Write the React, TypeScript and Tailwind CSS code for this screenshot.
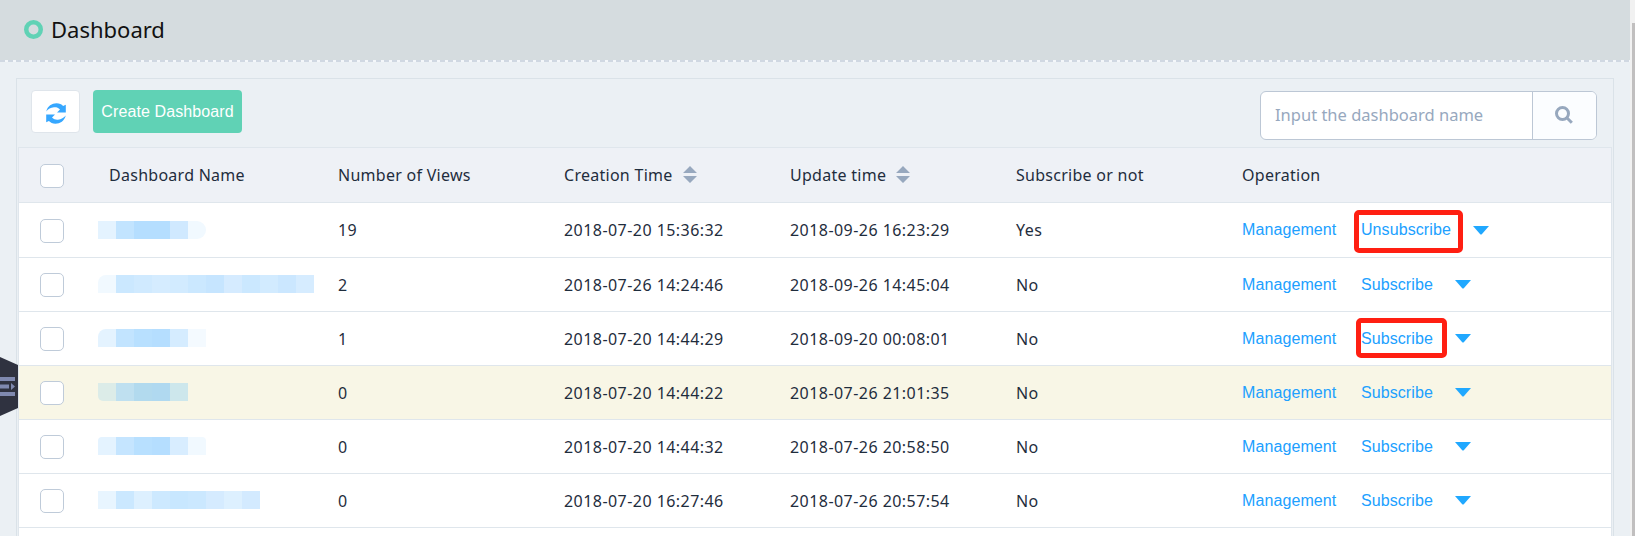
import React from "react";

type Row = {
  name: { tiles: string[]; shape?: string };
  views: string;
  created: string;
  updated: string;
  subscribed: boolean;
  active?: boolean;
  marked?: boolean;
};

const rows: Row[] = [
  {
    name: { tiles: ["#e4f3ff", "#c2e4ff", "#b5deff", "#b5deff", "#d0e9ff", "#f1f9ff"], shape: "rounded-r-[12px]" },
    views: "19", created: "2018-07-20 15:36:32", updated: "2018-09-26 16:23:29", subscribed: true, marked: true,
  },
  {
    name: { tiles: ["#f1f9ff", "#cbe8ff", "#d0eaff", "#d5ecff", "#d2ebff", "#cbe8ff", "#c6e5ff", "#d5ebff", "#cbe8ff", "#d2ebff", "#cbe7ff", "#d6ecff"], shape: "rounded-tl-[8px]" },
    views: "2", created: "2018-07-26 14:24:46", updated: "2018-09-26 14:45:04", subscribed: false,
  },
  {
    name: { tiles: ["#e4f3ff", "#c2e4ff", "#b8e0ff", "#b5deff", "#d5ecff", "#f4faff"], shape: "rounded-tl-[8px]" },
    views: "1", created: "2018-07-20 14:44:29", updated: "2018-09-20 00:08:01", subscribed: false, marked: true,
  },
  {
    name: { tiles: ["#dcece8", "#bfe0f0", "#b2daee", "#b0d9f0", "#cde7ec"], shape: "rounded-bl-[5px]" },
    views: "0", created: "2018-07-20 14:44:22", updated: "2018-07-26 21:01:35", subscribed: false, active: true,
  },
  {
    name: { tiles: ["#e4f3ff", "#c5e5ff", "#b8e0ff", "#b5deff", "#d8edff", "#f1f9ff"], shape: "rounded-t-[4px]" },
    views: "0", created: "2018-07-20 14:44:32", updated: "2018-07-26 20:58:50", subscribed: false,
  },
  {
    name: { tiles: ["#e8f5ff", "#cbe8ff", "#ddf0ff", "#cde9ff", "#c8e7ff", "#cbe8ff", "#d5ebff", "#ddf0ff", "#d3eaff"] },
    views: "0", created: "2018-07-20 16:27:46", updated: "2018-07-26 20:57:54", subscribed: false,
  },
];

const columns = "grid grid-cols-[91px_228px_226px_226px_226px_226px_1fr]";

function Checkbox({ low = false }: { low?: boolean }) {
  return (
    <span className={`ml-[21px] block size-6 rounded-[5px] border border-[#bfcbd9] bg-white ${low ? "mt-[2px]" : "mt-px"}`} />
  );
}

function SortIcon() {
  return (
    <svg className="ml-[10px] h-[17px] w-[14px]" viewBox="0 0 14 17" fill="#97a8be">
      <path d="M0 7 7 0l7 7zM0 10h14l-7 7z" />
    </svg>
  );
}

function HeaderRow() {
  return (
    <div className={`${columns} h-[56px] items-center border-y border-[#dfe6ec] bg-[#eef1f6] text-[16px] tracking-[0.27px] text-[#1f2d3d]`}>
      <Checkbox low />
      <span className="-ml-px">Dashboard Name</span>
      <span>Number of Views</span>
      <span className="flex items-center pb-px">Creation Time<SortIcon /></span>
      <span className="flex items-center pb-px">Update time<SortIcon /></span>
      <span>Subscribe or not</span>
      <span>Operation</span>
    </div>
  );
}

function SubscribeLink({ row }: { row: Row }) {
  return (
    <span className="relative">
      {row.subscribed ? "Unsubscribe" : "Subscribe"}
      {row.marked && (
        <span
          className={
            row.subscribed
              ? "absolute -left-[7px] -top-[8px] h-[43px] w-[109px] rounded-[5px] border-5 border-[#ff1f12]"
              : "absolute -left-[5px] -top-[9px] h-[40px] w-[91px] rounded-[5px] border-5 border-[#ff1f12]"
          }
        />
      )}
    </span>
  );
}

function TableRow({ row, first }: { row: Row; first: boolean }) {
  return (
    <div
      className={`${columns} shrink-0 items-center border-b border-[#dfe6ec] text-[16px] tracking-[0.45px] text-[#1f2d3d] ${first ? "h-[55px]" : "h-[54px]"} ${row.active ? "bg-[#f8f6e6]" : "bg-white"}`}
    >
      <Checkbox low={first} />
      <span className={`-ml-3 flex w-fit overflow-hidden ${first ? "" : "mb-px"} ${row.name.shape ?? ""}`}>
        {row.name.tiles.map((color, i) => (
          <span key={i} className="h-[18px] w-[18px]" style={{ backgroundColor: color }} />
        ))}
      </span>
      <span>{row.views}</span>
      <span>{row.created}</span>
      <span>{row.updated}</span>
      <span>{row.subscribed ? "Yes" : "No"}</span>
      <span className="flex items-center font-['Liberation_Sans',Arial,sans-serif] tracking-[0.1px] text-[#20a0ff]">
        <span className="mr-[24.500px]">Management</span>
        <SubscribeLink row={row} />
        <svg className="ml-[22px] h-[9px] w-[16px]" viewBox="0 0 16 9" fill="#20a8ff">
          <path d="M0 0h16L9 8q-1 1-2 0z" />
        </svg>
      </span>
    </div>
  );
}

function RefreshIcon() {
  return (
    <svg className="mt-[3px] h-[21px] w-[20px]" viewBox="0 0 20 21" fill="#36a7ff">
      <path d="M.3 8.500C1.500 3 6 .3 10.500.3c3 0 5 1.100 6.600 2.700l2.700-1.200v7.600h-8.800l3-3C12.200 4.500 10 4.100 8 4.300 4.700 4.600 2 6.200.3 8.500z" />
      <path d="M.3 8.500C1.500 3 6 .3 10.500.3c3 0 5 1.100 6.600 2.700l2.700-1.200v7.600h-8.800l3-3C12.200 4.500 10 4.100 8 4.300 4.700 4.600 2 6.200.3 8.500z" transform="rotate(180 10 10.500)" />
    </svg>
  );
}

export default function App() {
  return (
    <div className="flex h-[536px] w-[1635px] overflow-hidden bg-[#ebf0f4] font-['Noto_Sans','Noto_Sans_CJK_SC',sans-serif]">
      <main className="relative flex w-[1630px] flex-col">
        <header className="flex h-[60px] shrink-0 items-center bg-[#d5dcdf] pl-6 pb-px">
          <svg className="mr-[8px] size-[19px]" viewBox="0 0 19 19" fill="none" stroke="#60d2b5" strokeWidth="4.500">
            <circle cx="9.500" cy="9.500" r="7.250" />
          </svg>
          <h1 className="text-[22px] text-[#111]">Dashboard</h1>
        </header>
        <div className="h-[2px] shrink-0 bg-[repeating-linear-gradient(90deg,#d0d8e2_0px,#d0d8e2_5px,#f4f7fa_5px,#f4f7fa_8px)]" />
        <section className="ml-4 mt-4 flex h-[600px] w-[1598px] shrink-0 flex-col border border-[#dae2e8] px-px">
          <div className="flex h-[68px] shrink-0 items-start pl-[13px] pt-[11px]">
            <button className="flex h-[43px] w-[49px] items-center justify-center rounded-[4px] border border-[#dfe5eb] bg-white"><RefreshIcon /></button>
            <button className="ml-[13px] h-[43px] w-[149px] rounded-[4px] bg-[#60d2b5] pt-px font-['Liberation_Sans',Arial,sans-serif] text-[16px] tracking-[0.1px] text-white">Create Dashboard</button>
            <div className="ml-auto mr-[15px] mt-px flex h-[49px] w-[337px] overflow-hidden rounded-[6px] border border-[#bcc7d5] bg-white">
              <span className="flex flex-1 items-center pl-[14px] text-[16.500px] text-[#97a8be]">Input the dashboard name</span>
              <span className="flex w-16 items-center justify-center border-l border-[#bcc7d5] bg-[#fbfdff] pb-[2px] pr-px">
                <svg className="h-[18px] w-[18px]" viewBox="0 0 18 18" fill="none" stroke="#97a8be" strokeWidth="3">
                  <circle cx="7.500" cy="7.500" r="6" />
                  <path d="m11.800 11.800 5 5" />
                </svg>
              </span>
            </div>
          </div>
          <div className="flex shrink-0 flex-col border-x border-[#dfe6ec]">
            <HeaderRow />
            {rows.map((row, i) => <TableRow key={row.created} row={row} first={i === 0} />)}
            <div className="h-10 bg-white" />
          </div>
        </section>
        <svg className="absolute left-0 top-[357px] h-[60px] w-[18px]" viewBox="0 0 18 60">
          <path d="M0 0 18 8v43L0 59z" fill="#2f3240" />
          <path d="M0 20h15v4H0zM0 27.500h9v4H0zM11 26l4 3.500-4 3.500zM0 35h15v4H0z" fill="#7f89b0" />
        </svg>
      </main>
      <aside className="flex w-[5px] flex-col bg-[#f1f1f1] pl-[2px] pt-[23px]">
        <div className="flex-1 bg-[#c1bfbf]" />
      </aside>
    </div>
  );
}
